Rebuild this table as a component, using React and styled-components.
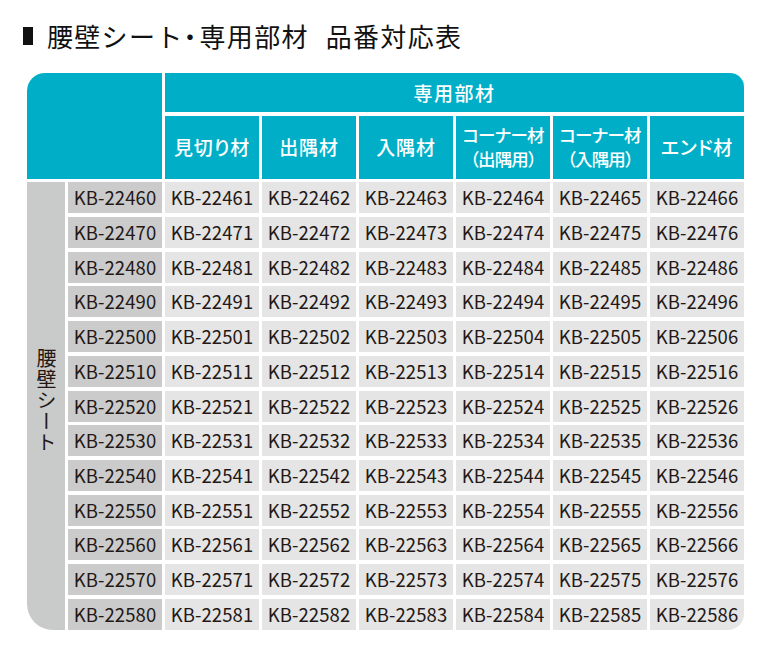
import React from "react";
import styled, { createGlobalStyle } from "styled-components";

const Global = createGlobalStyle`
  html, body { margin: 0; padding: 0; background: #ffffff; }
  body { font-family: "Noto Sans CJK JP", "Noto Sans", sans-serif; color: #231815; }
`;

const Page = styled.div`
  width: 780px;
  height: 660px;
  box-sizing: border-box;
  padding: 22px 0 0 27px;
`;

const Title = styled.h1`
  margin: 0 0 0 -4px;
  height: 28px;
  display: flex;
  align-items: center;
  gap: 14px;
  font-size: 26px;
  font-weight: 400;
  line-height: 28px;
  letter-spacing: 1.3px;
  color: #111;
`;

const TitleMark = styled.span`
  width: 10px;
  height: 18px;
  background: #111;
  flex: none;
`;

const Dot = styled.span`
  font-feature-settings: "palt";
  letter-spacing: 3px;
`;

const Space = styled.span`
  display: inline-block;
  width: 17px;
`;

const Table = styled.div`
  margin-top: 23px;
  width: 717px;
  display: grid;
  grid-template-columns: 38px 94px repeat(6, minmax(0, 1fr));
  grid-template-rows: 39px 63px repeat(13, 31px);
  column-gap: 3px;
  row-gap: 3.7px;
`;

const Corner = styled.div`
  grid-column: 1 / 3;
  grid-row: 1 / 3;
  background: #00afc7;
  border-top-left-radius: 18px;
`;

const GroupHead = styled.div`
  grid-column: 3 / 9;
  grid-row: 1;
  background: #00afc7;
  border-top-right-radius: 14px;
  display: flex;
  align-items: center;
  justify-content: center;
  color: #fff;
  font-size: 19px;
  font-weight: 500;
  letter-spacing: 1.5px;
  font-feature-settings: "palt";
  padding-bottom: 1px;
`;

const ColHead = styled.div`
  grid-row: 2;
  background: #00afc7;
  display: flex;
  flex-direction: column;
  align-items: center;
  justify-content: center;
  color: #fff;
  font-size: ${(p) => (p.$tight ? "17.5px" : "19px")};
  font-weight: 500;
  line-height: 24px;
  letter-spacing: ${(p) => (p.$tight ? "-0.8px" : "0.8px")};
  font-feature-settings: "palt";
  white-space: nowrap;
  text-align: center;
`;

const SideLabel = styled.div`
  grid-column: 1;
  grid-row: 3 / 16;
  background: #c9caca;
  border-bottom-left-radius: 26px;
  display: flex;
  align-items: center;
  justify-content: center;
  padding-bottom: 12px;
`;

const VerticalText = styled.span`
  writing-mode: vertical-rl;
  font-size: 20px;
  line-height: 20px;
  letter-spacing: 1px;
  color: #231815;
`;

const Cell = styled.div`
  background: ${(p) => (p.$key ? "#cbcbcb" : "#e5e5e5")};
  display: flex;
  align-items: center;
  justify-content: center;
  font-size: 18.5px;
  color: #231815;
  letter-spacing: 0.1px;
  border-bottom-right-radius: ${(p) => (p.$last ? "16px" : "0")};
  padding-bottom: 1px;
`;

const heads = [
  ["見切り材"],
  ["出隅材"],
  ["入隅材"],
  ["コーナー材", "（出隅用）"],
  ["コーナー材", "（入隅用）"],
  ["エンド材"],
];

const bases = [];
for (let n = 22460; n <= 22580; n += 10) bases.push(n);

export default function App() {
  return (
    <>
      <Global />
      <Page>
        <Title>
          <TitleMark />
          <span>
            腰壁シート<Dot>・</Dot>専用部材<Space />品番対応表
          </span>
        </Title>
        <Table>
          <Corner />
          <GroupHead>専用部材</GroupHead>
          {heads.map((h, i) => (
            <ColHead key={i} style={{ gridColumn: i + 3 }} $tight={h.length > 1}>
              {h.map((line, j) => (
                <span key={j}>{line}</span>
              ))}
            </ColHead>
          ))}
          <SideLabel>
            <VerticalText>腰壁シート</VerticalText>
          </SideLabel>
          {bases.map((b, r) =>
            [0, 1, 2, 3, 4, 5, 6].map((k) => (
              <Cell
                key={`${r}-${k}`}
                $key={k === 0}
                $last={r === bases.length - 1 && k === 6}
              >
                KB-{b + k}
              </Cell>
            ))
          )}
        </Table>
      </Page>
    </>
  );
}
